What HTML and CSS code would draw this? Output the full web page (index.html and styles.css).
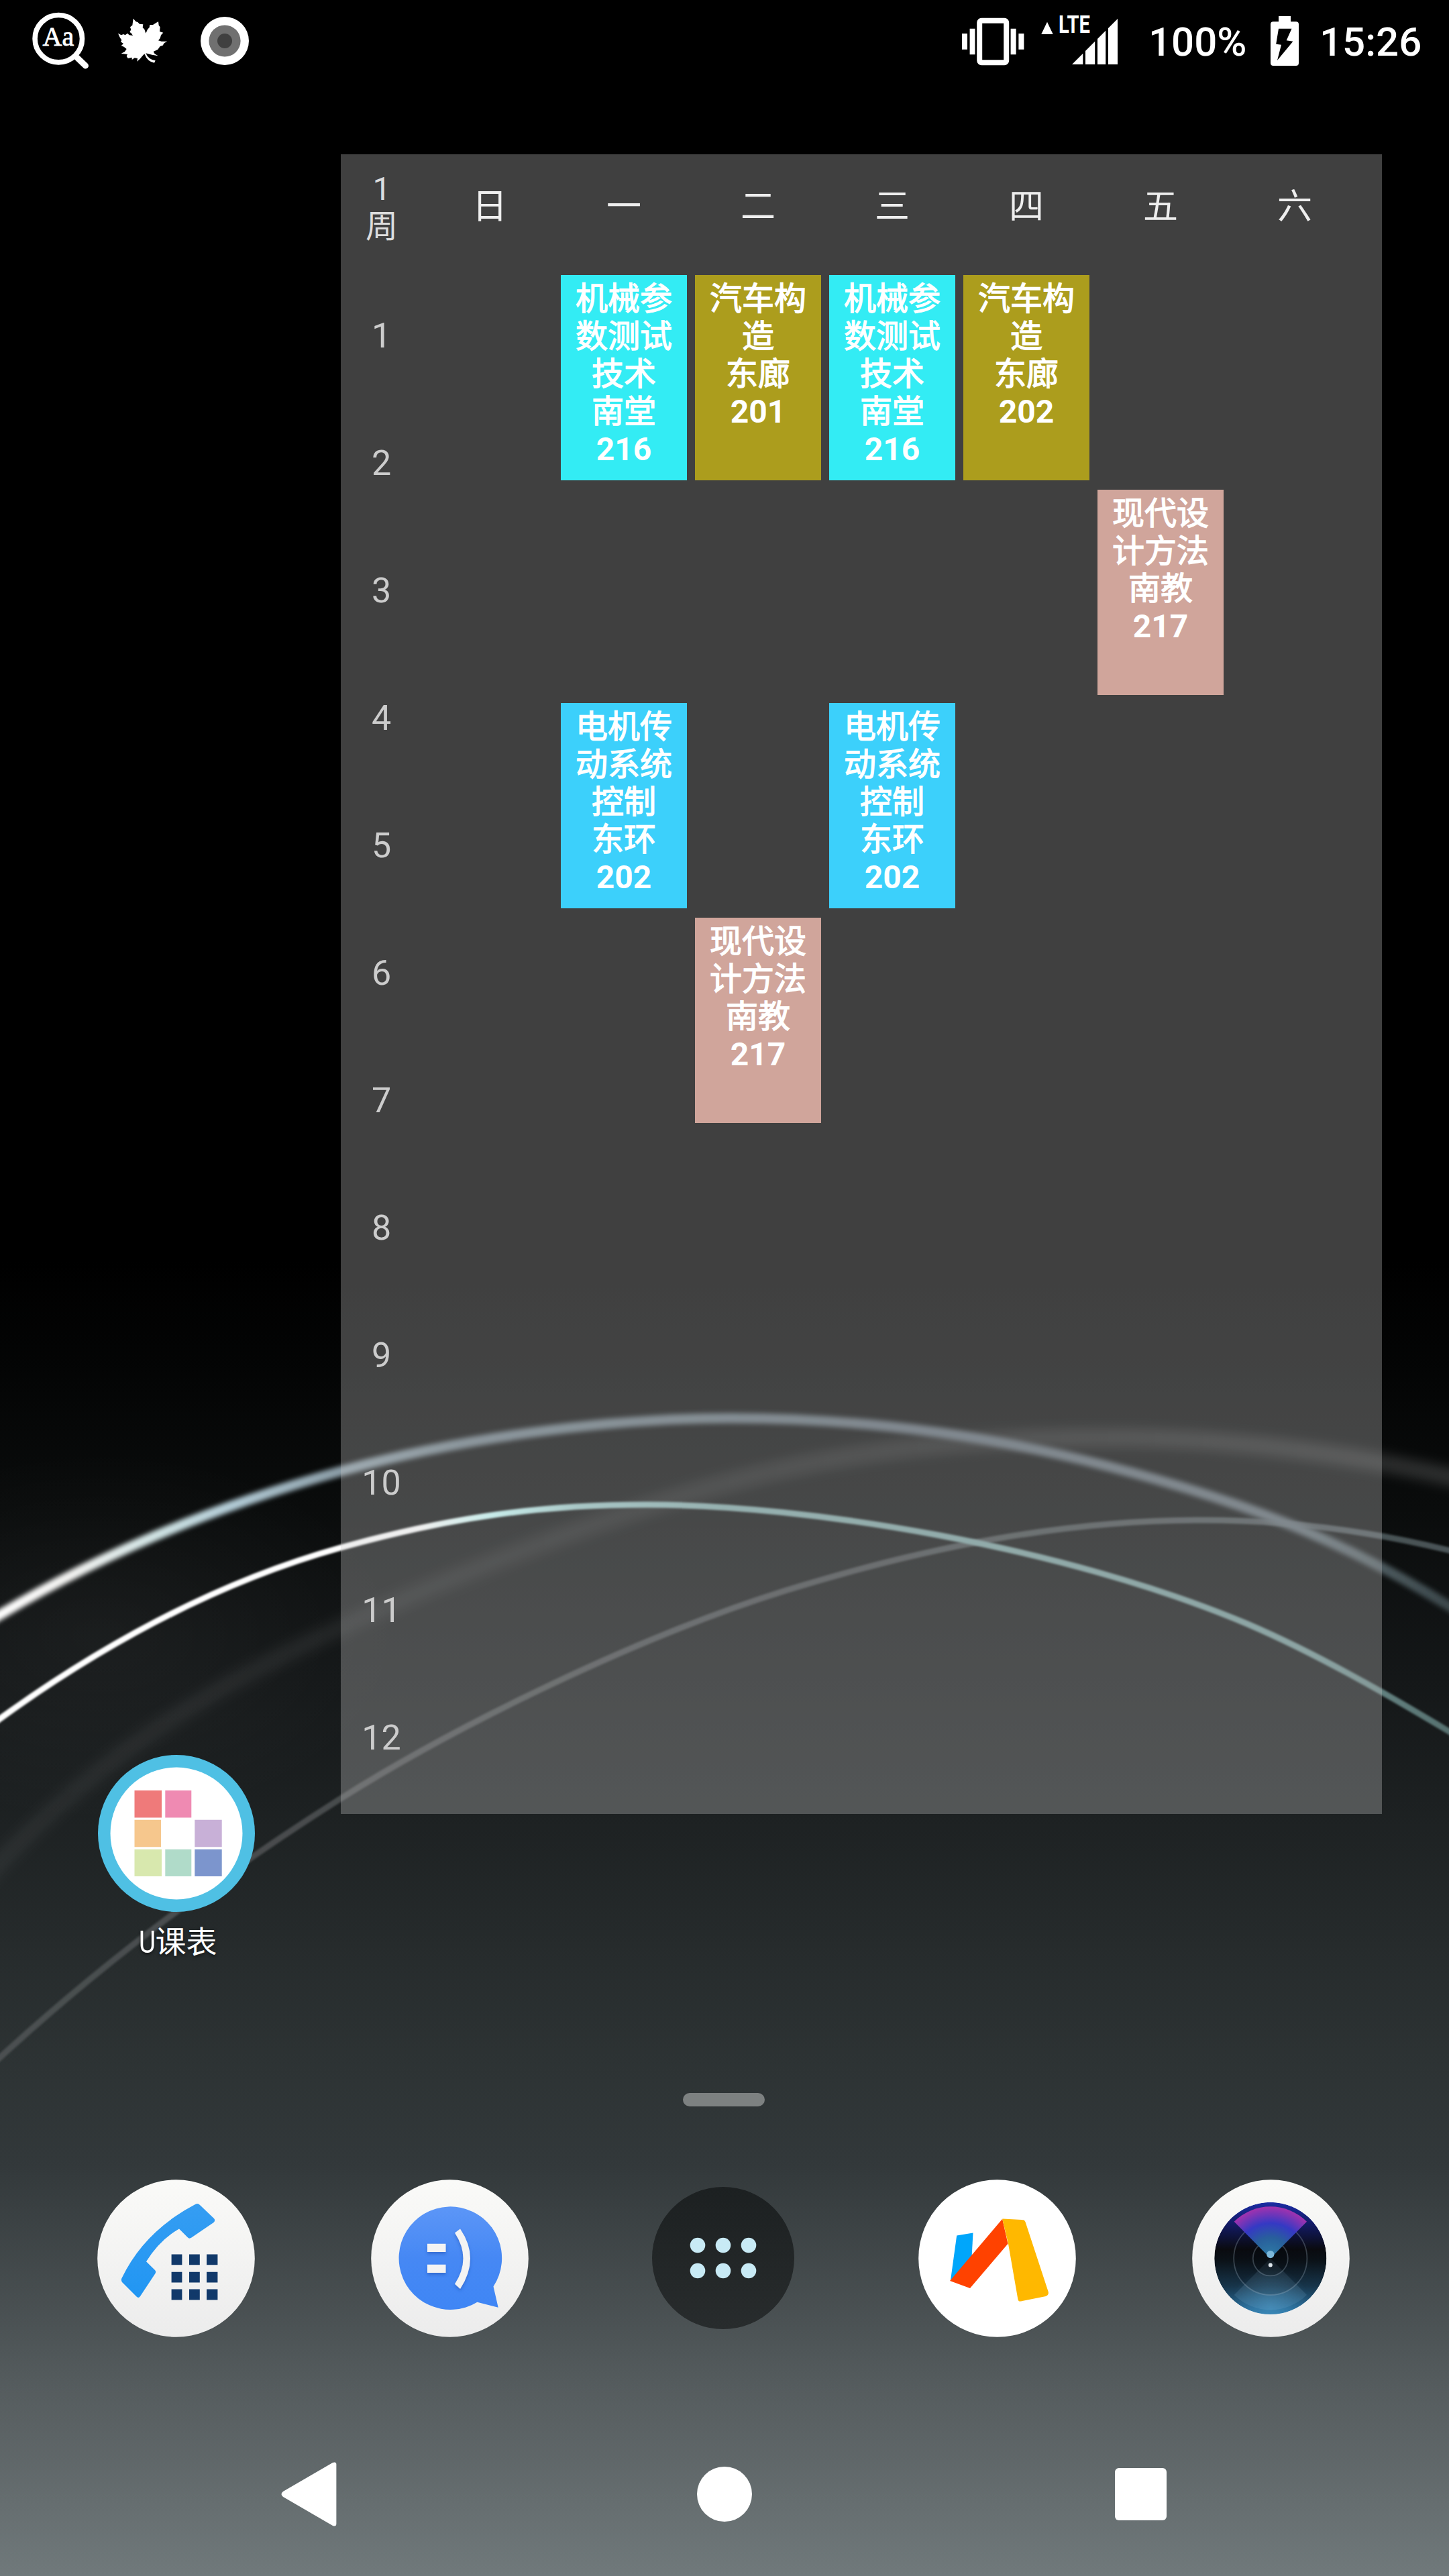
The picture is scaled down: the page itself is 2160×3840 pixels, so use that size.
FILE: index.html
```html
<!DOCTYPE html>
<html lang="zh-CN">
<head>
<meta charset="utf-8">
<title>U课表</title>
<link rel="stylesheet" href="styles.css">
</head>
<body>
<div class="screen">
  <svg class="wallpaper" viewBox="0 0 2160 3840" aria-hidden="true">
    <defs>
      <linearGradient id="arcA" gradientUnits="userSpaceOnUse" x1="0" y1="0" x2="2160" y2="0">
        <stop offset="0" stop-color="#fff"/><stop offset=".05" stop-color="#f2f2f0"/><stop offset=".11" stop-color="#cfe3e4"/>
        <stop offset=".16" stop-color="#b2cbd6"/><stop offset=".23" stop-color="#8d9fa9"/><stop offset=".32" stop-color="#6f7f88"/>
        <stop offset=".6" stop-color="#5f6b74"/><stop offset=".9" stop-color="#5e6b72"/><stop offset="1" stop-color="#3c494c"/>
      </linearGradient>
      <linearGradient id="arcB" gradientUnits="userSpaceOnUse" x1="0" y1="0" x2="2160" y2="0">
        <stop offset="0" stop-color="#fff"/><stop offset=".29" stop-color="#fff"/><stop offset=".34" stop-color="#c6fbf8"/>
        <stop offset=".4" stop-color="#98c4c3"/><stop offset=".5" stop-color="#7da4a3"/><stop offset=".9" stop-color="#6f9291"/><stop offset="1" stop-color="#56706f"/>
      </linearGradient>
      <linearGradient id="arcC" gradientUnits="userSpaceOnUse" x1="0" y1="0" x2="2160" y2="0">
        <stop offset="0" stop-color="#fff" stop-opacity=".05"/><stop offset=".5" stop-color="#fff" stop-opacity=".08"/><stop offset="1" stop-color="#fff" stop-opacity=".14"/>
      </linearGradient>
      <linearGradient id="arcD" gradientUnits="userSpaceOnUse" x1="0" y1="0" x2="2160" y2="0">
        <stop offset="0" stop-color="#4b5051"/><stop offset=".3" stop-color="#46494b"/><stop offset=".6" stop-color="#404446"/><stop offset="1" stop-color="#485356"/>
      </linearGradient>
      <radialGradient id="haze"><stop offset="0" stop-color="#fff" stop-opacity=".04"/><stop offset="1" stop-color="#fff" stop-opacity="0"/></radialGradient>
      <filter id="soft" x="-5%" y="-20%" width="110%" height="140%"><feGaussianBlur stdDeviation="3.5"/></filter>
      <filter id="fine" x="-5%" y="-20%" width="110%" height="140%"><feGaussianBlur stdDeviation="1.6"/></filter>
      <filter id="wide" x="-5%" y="-20%" width="110%" height="140%"><feGaussianBlur stdDeviation="8"/></filter>
    </defs>
    <ellipse cx="150" cy="2440" rx="450" ry="280" fill="url(#haze)"/>
    <g fill="none">
      <path stroke="url(#arcC)" stroke-width="28" filter="url(#wide)" d="M-60 2843L0 2776C169 2598 339 2505 508 2426S950 2238 1171 2189C1332 2154 1492 2143 1653 2143S1991 2163 2160 2201L2220 2215"/>
      <path stroke="url(#arcD)" stroke-width="9" filter="url(#fine)" d="M-60 3123L0 3067C169 2912 339 2788 508 2681S950 2440 1171 2371C1378 2307 1584 2266 1791 2266C1914 2266 2037 2281 2160 2311L2220 2326"/>
      <path stroke="url(#arcA)" stroke-width="15" filter="url(#soft)" d="M-60 2443L0 2407C169 2306 339 2240 508 2193S895 2114 1088 2114S1465 2137 1653 2186S1991 2289 2160 2394L2220 2431"/>
      <path stroke="url(#arcB)" stroke-width="9" filter="url(#fine)" d="M-60 2606L0 2562C169 2440 339 2354 508 2307S812 2243 964 2243C1205 2243 1585 2305 1860 2421C1960 2464 2060 2521 2160 2581L2220 2617"/>
    </g>
  </svg>

  <header class="status">
    <svg class="st-find" width="90" height="90" viewBox="45 15 90 90">
      <circle cx="87.3" cy="57.7" r="35.2" fill="none" stroke="#fff" stroke-width="7.6"/>
      <path d="M115 86L127.5 98" stroke="#fff" stroke-width="9" stroke-linecap="round"/>
      <text class="aa" x="63.5" y="68.3">Aa</text>
    </svg>
    <svg class="st-leaf" width="76" height="70" viewBox="525 80 228 210">
      <path fill="#fff" d="M596 82L608 96L616 98L624 106L640 108L638 122L646 130L652 148L660 130L668 122L670 110L684 110L708 95L710 112L716 120L714 140L730 145L720 156L716 170L708 180L722 184L748 184L734 192L728 202L716 206L706 220L686 230L692 240L707 249L680 244L652 237Q664 266 695 270L690 280Q660 276 646 240L638 248L626 262L613 274L615 260L602 258L590 266L590 256L572 260L566 250L570 242L542 238L558 230L566 218L554 208L542 204L552 194L540 186L544 178L536 166L528 148L542 156L552 152L560 156L570 148L578 156L594 158L588 148L580 142L586 132L582 120L592 112Z"/>
    </svg>
    <svg class="st-disc" width="74" height="74" viewBox="-37 -37 74 74">
      <circle r="36" fill="#fff"/><circle r="23.6" fill="#707070"/><circle r="11" fill="#404040"/>
    </svg>
    <svg class="st-net" width="240" height="90" viewBox="1430 15 240 90" fill="#fff">
      <rect x="1460.2" y="30.7" width="40" height="62.6" rx="3" fill="none" stroke="#fff" stroke-width="8"/>
      <path d="M1434 50h8v23.7h-8zM1445.6 42.7h7.8v38.6h-7.8zM1506.6 42.7h8v38.6h-8zM1518.4 50h8v23.7h-8zM1561 32.7L1569.7 51H1552.2z"/>
      <text class="lte" x="1578" y="49" textLength="47" lengthAdjust="spacingAndGlyphs">LTE</text>
      <path d="M1598 96L1614.3 79.7V96zM1618 76L1632.2 61.8V96H1618zM1636 58L1648.2 45.8V96H1636zM1652 42L1666 28V96H1652z"/>
    </svg>
    <span class="st-text pct">100%</span>
    <svg class="st-batt" width="42" height="74" viewBox="1894 24 42 74">
      <path fill="#fff" d="M1906 24h18v8.3h8a4 4 0 0 1 4 4V94a4 4 0 0 1-4 4h-34a4 4 0 0 1-4-4V36.300a4 4 0 0 1 4-4h8z"/>
      <path d="M1906 42.700H1925.500L1917.700 60.300L1927.400 61.700L1904 90L1910 66.700L1902.200 65.700Z"/>
    </svg>
    <span class="st-text">15:26</span>
  </header>

  <main class="home">
    <div class="app">
      <svg width="234" height="234" viewBox="146 2616 234 234">
        <circle cx="263" cy="2733" r="117" fill="#4fc0e4"/><circle cx="263" cy="2733" r="98.500" fill="#fff"/>
        <path fill="#ef7a7a" d="M200.500 2669h40.500v40.500h-40.500z"/><path fill="#ef8ab2" d="M246.300 2669h39v40.500h-39z"/>
        <path fill="#f6c78d" d="M200.500 2712.700h39.500v40.500h-39.500z"/><path fill="#c8b0d7" d="M290.300 2712.700h40.400v40.500h-40.400z"/>
        <path fill="#d8e8ae" d="M200.500 2756.700h40.500v40.300h-40.500z"/><path fill="#b0dbc9" d="M246.300 2756.700h39v40.300h-39z"/><path fill="#7c95cd" d="M290.300 2756.700h40.400v40.300h-40.400z"/>
      </svg>
      <span class="app-name"><span class="narrow">U</span>课表</span>
    </div>

    <section class="timetable">
      <div class="days">
        <div class="week">1<br>周</div>
        <div>日</div><div>一</div><div>二</div><div>三</div><div>四</div><div>五</div><div>六</div>
      </div>
      <div class="body">
        <div class="hours">
          <div>1</div><div>2</div><div>3</div><div>4</div><div>5</div><div>6</div><div>7</div><div>8</div><div>9</div><div>10</div><div>11</div><div>12</div>
        </div>
        <div class="lessons">
          <div class="lesson mon s1 cyan"><span>机械参数测试技术<br>南堂</span><b>216</b></div>
          <div class="lesson tue s1 olive"><span>汽车构造<br>东廊</span><b>201</b></div>
          <div class="lesson wed s1 cyan"><span>机械参数测试技术<br>南堂</span><b>216</b></div>
          <div class="lesson thu s1 olive"><span>汽车构造<br>东廊</span><b>202</b></div>
          <div class="lesson fri s2 rose"><span>现代设计方法<br>南教</span><b>217</b></div>
          <div class="lesson mon s3 blue"><span>电机传动系统控制<br>东环</span><b>202</b></div>
          <div class="lesson wed s3 blue"><span>电机传动系统控制<br>东环</span><b>202</b></div>
          <div class="lesson tue s4 rose"><span>现代设计方法<br>南教</span><b>217</b></div>
        </div>
      </div>
    </section>
  </main>

  <div class="handle"></div>

  <nav class="dock">
    <svg viewBox="0 0 235 235">
      <defs>
        <linearGradient id="plate" x2="0" y2="1"><stop stop-color="#fafaf8"/><stop offset="1" stop-color="#ececec"/></linearGradient>
        <linearGradient id="call" x2="0" y2="1"><stop stop-color="#359df2"/><stop offset="1" stop-color="#2196f3"/></linearGradient>
      </defs>
      <circle cx="117.500" cy="117.500" r="117.300" fill="url(#plate)"/>
      <path fill="url(#call)" d="M146 37Q150 34.500 153 38L174 58Q176.500 61 173.500 64L140.500 86.500Q137 89 134.500 86L122 73.400Q93 90 73 122.300L86 135Q88 137 86.500 140L64 174Q61.500 177.500 58.500 174.500L37 153Q35 150 36.500 147Q70 77 146 37Z"/>
      <path fill="#11396a" d="M110.600 111.400h15.800v15.800h-15.800zM137 111.400h15.800v15.800H137zM163 111.400h16.400v15.800H163zM110.600 137.700h15.800v15.800h-15.800zM137 137.700h15.800v15.800H137zM163 137.700h16.400v15.800H163zM110.600 163.400h15.800v16.200h-15.800zM137 163.400h15.800v16.200H137zM163 163.400h16.400v16.200H163z"/>
    </svg>
    <svg viewBox="0 0 235 235">
      <defs>
        <linearGradient id="chat" x2="0" y2="1"><stop stop-color="#5c96f7"/><stop offset=".5" stop-color="#4688f4"/><stop offset="1" stop-color="#3f86f5"/></linearGradient>
        <filter id="drop"><feDropShadow dx="0" dy="3" stdDeviation="2" flood-color="#1c50b0" flood-opacity=".5"/></filter>
      </defs>
      <circle cx="117.500" cy="117.500" r="117.300" fill="url(#plate)"/>
      <path fill="url(#chat)" d="M182.500 159.400L189.700 190.700L158.400 182.700A76.800 76.800 0 1 1 182.500 159.400Z"/>
      <path fill="#f3f3f3" filter="url(#drop)" d="M84 95.700h27.500v12.300H84zM84 126.700h27.500v12.300H84zM133 73.400L125 79.400Q150 117.500 125 155.700L133 163Q163 117.500 133 73.400Z"/>
    </svg>
    <svg viewBox="0 0 235 235">
      <defs><linearGradient id="drawer" x2="0" y2="1"><stop stop-color="#1c2021"/><stop offset="1" stop-color="#282c2d"/></linearGradient></defs>
      <circle cx="117" cy="117" r="106" fill="url(#drawer)"/>
      <g fill="#c8eaf5"><circle cx="79" cy="98" r="11.300"/><circle cx="117" cy="98" r="11.300"/><circle cx="155" cy="98" r="11.300"/><circle cx="79" cy="136" r="11.300"/><circle cx="117" cy="136" r="11.300"/><circle cx="155" cy="136" r="11.300"/></g>
    </svg>
    <svg viewBox="0 0 235 235">
      <circle cx="117.500" cy="117.500" r="117.300" fill="#fff"/>
      <path fill="#00a6fb" d="M57.200 83.400L81.500 79.400L79.300 120L48 150Z"/>
      <path fill="#ff4200" d="M125.200 58.700L133.500 95.700L77 162L47 151Z"/>
      <path fill="#ffb800" d="M126 58.500L154 60Q158.500 60 159.600 63.500L193.600 167Q195 172 190 174L153 181.400Q149 182.500 148.300 178L134 95.700L125.200 58.700Z"/>
    </svg>
    <svg viewBox="0 0 235 235">
      <defs>
        <linearGradient id="lens" x2="0" y2="1"><stop stop-color="#1b2da4"/><stop offset=".2" stop-color="#121a63"/><stop offset=".42" stop-color="#0a0b10"/><stop offset=".52" stop-color="#0b1218"/><stop offset=".75" stop-color="#17354b"/><stop offset="1" stop-color="#2b74a5"/></linearGradient>
        <radialGradient id="fan" gradientUnits="userSpaceOnUse" cx="116.800" cy="117.400" r="77"><stop stop-color="#2f7fa6"/><stop offset=".4" stop-color="#285f9c"/><stop offset=".68" stop-color="#3539c4"/><stop offset="1" stop-color="#a232ae"/></radialGradient>
        <radialGradient id="glow" gradientUnits="userSpaceOnUse" cx="117" cy="192" r="60"><stop stop-color="#4a9dcc" stop-opacity=".5"/><stop offset="1" stop-color="#4a9dcc" stop-opacity="0"/></radialGradient>
        <clipPath id="lensClip"><circle cx="116.800" cy="117.400" r="83.600"/></clipPath>
      </defs>
      <circle cx="117.500" cy="117.500" r="117.300" fill="url(#plate)"/>
      <g clip-path="url(#lensClip)">
        <circle cx="116.800" cy="117.400" r="83.600" fill="url(#lens)"/>
        <circle cx="117" cy="192" r="60" fill="url(#glow)"/>
        <path fill="#9cc8e4" fill-opacity=".13" d="M116.800 117.400L171 172A76.700 76.700 0 0 1 62.700 172Z"/>
        <circle cx="116.800" cy="117.400" r="54.600" fill="#05080c" fill-opacity=".15" stroke="#9fb4c4" stroke-opacity=".3" stroke-width="1.800"/>
        <circle cx="116.800" cy="117.400" r="26" fill="#05080c" fill-opacity=".25" stroke="#9fb4c4" stroke-opacity=".3" stroke-width="1.800"/>
        <path fill="url(#fan)" d="M116.800 117.400L62.700 62.700A76.700 76.700 0 0 1 171 62.700Z"/>
      </g>
      <circle cx="116.800" cy="111.500" r="5.600" fill="#7cb8da"/><circle cx="116.800" cy="127.400" r="3" fill="#dfe6ec"/>
    </svg>
  </nav>

  <nav class="keys">
    <svg width="84" height="98" viewBox="418 3669 84 98"><path fill="#fff" d="M422 3714L496 3671Q501.400 3669 501.400 3674V3762Q501.400 3767 496 3765L422 3722Q417 3718 422 3714Z"/></svg>
    <svg width="82" height="82" viewBox="0 0 82 82"><circle cx="39" cy="41" r="41" fill="#fff"/></svg>
    <svg width="78" height="78" viewBox="0 0 78 78"><rect width="77" height="78" rx="6" fill="#fff"/></svg>
  </nav>
</div>
</body>
</html>
```
FILE: styles.css
```css
* {
  box-sizing: border-box;
}

svg {
  overflow: visible;
}

body {
  margin: 0;
  background: #000;
  font-family: Roboto, "Noto Sans CJK SC", sans-serif;
}

.screen {
  position: relative;
  display: flex;
  flex-direction: column;
  width: 2160px;
  height: 3840px;
  overflow: hidden;
  background: linear-gradient(#000 0, #000 1880px, #040505 2050px, #0a0c0c 2250px, #141718 2500px, #1d2122 2704px, #262b2c 2900px, #2d3334 3080px, #32383a 3220px, #4f5658 3500px, #5b6264 3620px, #70797b 3840px);
}

.wallpaper {
  position: absolute;
  inset: 0;
  width: 2160px;
  height: 3840px;
}

.status,
.home,
.handle,
.dock,
.keys {
  position: relative;
  flex: none;
}

.status {
  display: flex;
  align-items: flex-start;
  height: 230px;
  padding-left: 45px;
  color: #fff;
}

.st-find { margin-top: 15px; }
.st-leaf { margin: 26.7px 0 0 40px; }
.st-disc { margin: 23.7px 0 0 47px; }
.st-net { margin: 15px 0 0 1058px; }
.st-batt { margin: 24px 31px 0 0; }

.st-text {
  margin-top: 28px;
  font-size: 60px;
  font-weight: 500;
  line-height: 70px;
}

.pct {
  width: 182px;
  margin-left: 42px;
}

.aa {
  fill: #fff;
  stroke: #fff;
  stroke-width: .8px;
  font: 40px "Liberation Serif", serif;
}

.lte {
  font: bold 37px Roboto, sans-serif;
}

.home {
  display: grid;
  grid-template-columns: 508px 1552px;
  align-items: start;
  height: 2694px;
}

.app {
  display: flex;
  flex-direction: column;
  align-items: center;
  align-self: end;
  width: 234px;
  margin-left: 146px;
}

.app-name {
  margin: 16px 0 0 4px;
  color: #fff;
  font-size: 46px;
  line-height: 58px;
  text-shadow: 0 2px 5px rgba(0, 0, 0, .6);
}

.narrow {
  display: inline-block;
  width: 25px;
  transform: scaleX(.84);
  transform-origin: left;
}

.timetable {
  height: 2474px;
  background: rgba(204, 204, 204, .314);
}

.days {
  display: grid;
  grid-template-columns: 122px repeat(7, 200px);
  height: 180px;
  color: #eee;
  font-size: 52px;
  line-height: 158px;
  text-align: center;
}

.week {
  padding-top: 24px;
  color: #ddd;
  font-size: 48px;
  line-height: 56px;
}

.body {
  display: flex;
}

.hours {
  width: 121px;
  color: #ccc;
  font-size: 52px;
  line-height: 181px;
  text-align: center;
}

.hours div {
  height: 190px;
}

.lessons {
  display: grid;
  grid-template-columns: repeat(7, 188px);
  grid-template-rows: 307px 305px 307px 306px;
  gap: 13px 12px;
  align-content: start;
  margin-left: 7px;
}

.lesson {
  display: flex;
  flex-direction: column;
  height: 306px;
  padding-top: 8px;
  color: #fff;
  font-size: 48px;
  line-height: 56px;
  text-align: center;
}

.lesson span {
  -webkit-text-stroke: 1.300px #fff;
}

.mon { grid-column: 2; }
.tue { grid-column: 3; }
.wed { grid-column: 4; }
.thu { grid-column: 5; }
.fri { grid-column: 6; }

.s1 { grid-row: 1; }
.s2 { grid-row: 2; }
.s3 { grid-row: 3; }
.s4 { grid-row: 4; }

.cyan { background: #33ecf4; }
.olive { background: #ac9d1d; }
.rose { background: #d0a59b; }
.blue { background: #3cd0fb; }

.handle {
  width: 122px;
  height: 20px;
  margin: 196px 0 0 1018px;
  border-radius: 10px;
  background: #7d8181;
}

.dock {
  display: flex;
  gap: 173px;
  height: 235px;
  margin: 109px 0 0 145px;
}

.dock svg {
  flex: none;
  width: 235px;
  height: 235px;
}

.keys {
  display: flex;
  align-items: center;
  justify-content: space-between;
  width: 1322px;
  height: 98px;
  margin: 185px 0 0 418px;
}
```
